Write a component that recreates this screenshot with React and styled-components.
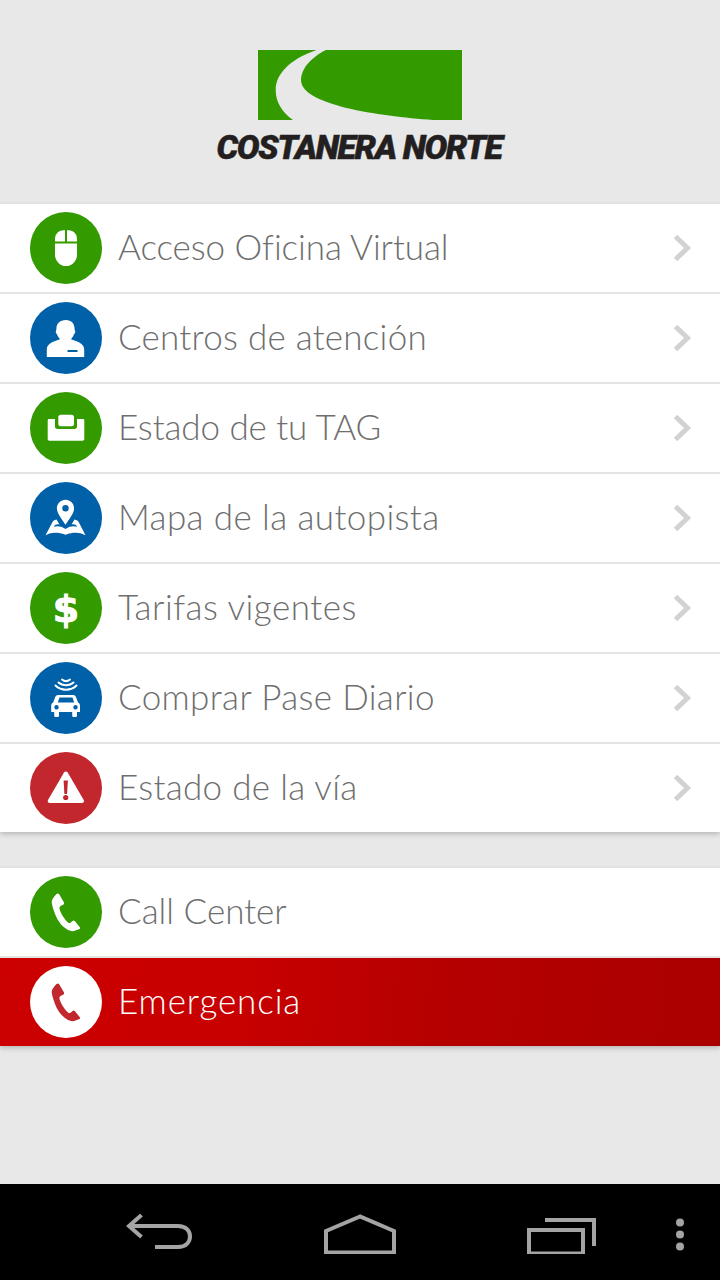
import styled, { createGlobalStyle } from "styled-components";

const GREEN = "#339a00";
const BLUE = "#0060a8";
const RED = "#c1272d";

const GlobalStyle = createGlobalStyle`
  html, body {
    margin: 0;
    padding: 0;
    background: #e8e8e8;
  }
`;

const Screen = styled.div`
  width: 720px;
  height: 1280px;
  display: flex;
  flex-direction: column;
  background: #e8e8e8;
  font-family: Lato, "Noto Sans", sans-serif;
  overflow: hidden;
`;

const Header = styled.header`
  height: 204px;
  flex-shrink: 0;
  display: flex;
  flex-direction: column;
  align-items: center;
  padding-top: 50px;
  box-sizing: border-box;
`;

const LogoMark = styled.svg`
  width: 204px;
  height: 70px;
  display: block;
`;

const LogoText = styled.div`
  margin: 10px 2px 0 0;
  font-family: Roboto, "Liberation Sans", sans-serif;
  font-weight: 900;
  font-style: italic;
  font-size: 34px;
  line-height: 34px;
  letter-spacing: -1.4px;
  -webkit-text-stroke: 0.5px #231f20;
  color: #231f20;
  white-space: nowrap;
`;

const Group = styled.nav`
  display: flex;
  flex-direction: column;
  flex-shrink: 0;
  margin-bottom: 36px;
  box-shadow: 0 2px 5px rgba(0, 0, 0, 0.22);
`;

const Row = styled.a`
  height: 88px;
  display: flex;
  align-items: center;
  gap: 16px;
  padding: 0 28px 0 30px;
  background: ${(p) => (p.$danger ? "linear-gradient(95deg, #cc0000 0%, #c80000 33%, #b60000 60%, #aa0000 100%)" : "#fff")};
  color: ${(p) => (p.$danger ? "#fff" : "#6e6e6e")};
`;

const Divider = styled.div`
  display: flex;
  flex-direction: column;
  gap: 2px;
  background: #e4e4e4;
`;

const Circle = styled.span`
  width: 72px;
  height: 72px;
  flex-shrink: 0;
  border-radius: 50%;
  background: ${(p) => p.$color};
  display: block;
`;

const CircleIcon = styled.svg`
  width: 72px;
  height: 72px;
  display: block;
`;

const Label = styled.span`
  flex: 1;
  font-size: 35px;
  font-weight: 300;
  line-height: 40px;
  letter-spacing: ${(p) => p.$spacing || 0}px;
  font-variant-ligatures: none;
  white-space: nowrap;
  padding-bottom: 4px;
`;

const Chevron = styled.svg`
  width: 20px;
  height: 28px;
  flex-shrink: 0;
`;

const Spacer = styled.div`
  flex: 1;
`;

const NavBar = styled.footer`
  height: 96px;
  flex-shrink: 0;
  background: #000;
  display: grid;
  grid-template-columns: 200px 200px 200px 40px;
  align-items: start;
  justify-items: center;
  padding: 30px 0 0 60px;
  box-sizing: border-box;
`;

const NavIcon = styled.svg`
  width: ${(p) => p.$w}px;
  height: 40px;
  display: block;
  fill: none;
  stroke: #a4a4a4;
  stroke-width: 4;
`;

const MouseIcon = () => (
  <CircleIcon viewBox="0 0 72 72" fill="#fff">
    <path d="M25 31.5H47V42.5a11 11.5 0 0 1-22 0Z" />
    <path d="M25 29.5V26.5a8.5 8.5 0 0 1 10-8.2V29.5Z" />
    <path d="M47 29.5V26.5a8.5 8.5 0 0 0-10-8.2V29.5Z" />
  </CircleIcon>
);

const PersonIcon = () => (
  <CircleIcon viewBox="0 0 72 72" fill="#fff">
    <path d="M36 18c5.500 0 8.600 3.800 8.600 9 0 1 .4 1.600.6 2.400.2 1.200-.5 2.200-1.200 2.600-.5 2-1.400 3.400-2.600 4.400v1.200c4 1.600 12.800 3.400 12.800 9.600V55H16.800v-7.800c0-6.200 8.800-8 12.800-9.600v-1.200c-1.200-1-2.100-2.400-2.600-4.400-.7-.4-1.400-1.400-1.200-2.600.2-.8.6-1.400.6-2.400 0-5.200 3.100-9 9.600-9Z" />
    <rect x="37.500" y="48" width="10" height="2" fill={BLUE} />
  </CircleIcon>
);

const TagIcon = () => (
  <CircleIcon viewBox="0 0 72 72" fill="#fff">
    <path d="M19 27h6v7.500c0 1.500 1 2.500 2.500 2.500h17c1.500 0 2.500-1 2.500-2.500V27h6c.8 0 1.300.5 1.300 1.300V47c0 1-.7 1.700-1.700 1.700H19.400c-1 0-1.700-.7-1.700-1.700V28.300c0-.8.500-1.300 1.300-1.300Z" />
    <rect x="28.300" y="22.700" width="15.700" height="11.500" rx="2.500" />
  </CircleIcon>
);

const MapIcon = () => (
  <CircleIcon viewBox="0 0 72 72" fill="#fff">
    <path fillRule="evenodd" d="M35.500 17.700c4.800 0 8.600 3.800 8.600 8.500 0 5-5 11-8.600 16.500-3.600-5.500-8.600-11.500-8.600-16.500 0-4.700 3.800-8.500 8.600-8.500Zm0 5.300a3.200 3.200 0 1 0 0 6.400 3.200 3.200 0 0 0 0-6.400Z" />
    <path d="M26.500 37.500c1 1.800 2 3.300 3 5-2.500-.5-4.300 0-5.800 2.300 2.800-1 7.300-1 11.800 2.200 4.500-3.200 9-3.200 11.800-2.200-1.500-2.300-3.300-2.800-5.800-2.300 1-1.700 2-3.200 3-5 2.300.5 3.700 1.200 4.700 3.500l6.300 12.300c-3.500-2-10-4.300-20-.5-10-3.800-16.500-1.500-20 .5L22 41c1-2.300 2.200-3 4.500-3.500Z" />
  </CircleIcon>
);

const DollarIcon = () => (
  <CircleIcon viewBox="0 0 72 72">
    <text x="36" y="50" textAnchor="middle" fill="#fff" stroke="#fff" strokeWidth="1" fontFamily="'DejaVu Sans', sans-serif" fontWeight="700" fontSize="38">$</text>
  </CircleIcon>
);

const CarIcon = () => (
  <CircleIcon viewBox="0 0 72 72">
    <g fill="none" stroke="#fff" strokeWidth="2" strokeLinecap="round">
      <path d="M32 17.500c2.500 2 5.500 2 8 0" />
      <path d="M28.500 20.500c4 3.600 11 3.600 15 0" />
      <path d="M25.500 23.500c5.500 5.500 15.500 5.500 21 0" />
    </g>
    <path
      fill="#fff"
      fillRule="evenodd"
      d="M29 33h14c1.500 0 2.500.7 3 2l2 5.500c1.300.7 2 1.800 2 3.200V50h-3v3.500c0 1-.6 1.500-1.500 1.500h-1.800c-.9 0-1.500-.5-1.500-1.500V50H29v3.500c0 1-.6 1.500-1.500 1.500h-1.800c-.9 0-1.500-.5-1.500-1.500V50h-3v-6.300c0-1.400.7-2.500 2-3.200l2-5.500c.5-1.300 1.500-2 3-2Zm.5 2.500-1.700 5h16.400l-1.700-5ZM26.500 43a2.200 2.200 0 1 0 0 4.400 2.200 2.200 0 0 0 0-4.400Zm19 0a2.200 2.200 0 1 0 0 4.400 2.200 2.200 0 0 0 0-4.400Z"
    />
  </CircleIcon>
);

const WarningIcon = () => (
  <CircleIcon viewBox="0 0 72 72">
    <path fill="#fff" d="M34 20.500c.9-1.500 2.800-1.500 3.700 0l16 27.500c.8 1.500-.1 3-1.800 3H19.800c-1.700 0-2.600-1.500-1.800-3Z" />
    <path fill={RED} d="M33.600 28.500h4.300l-.8 13.500h-2.700Z" />
    <circle cx="35.700" cy="45.500" r="2.600" fill={RED} />
  </CircleIcon>
);

const PhoneIcon = ({ color }) => (
  <CircleIcon viewBox="0 0 72 72">
    <path
      fill={color}
      d="M26.500 18Q28 17 29 18L34 26.500Q34.500 27.800 33.500 28.500L30.500 30Q29 31 29.500 33Q32 41 38 46.500Q39 47.500 40.500 46.800L42.500 45Q43.800 44 44.800 45L50 51.500Q50.500 52.500 49.500 53L44 55Q41 55.500 38 54Q29 49 25 38Q22 30 21.700 26Q21.700 23 26.500 18Z"
    />
  </CircleIcon>
);

const RightArrow = () => (
  <Chevron viewBox="0 0 20 28">
    <path d="M3.500 2.500 15.500 14 3.500 25.500" fill="none" stroke="#d2d2d2" strokeWidth="5" />
  </Chevron>
);

const menuItems = [
  { label: "Acceso Oficina Virtual", color: GREEN, Icon: MouseIcon, spacing: -0.07 },
  { label: "Centros de atención", color: BLUE, Icon: PersonIcon, spacing: 0.25 },
  { label: "Estado de tu TAG", color: GREEN, Icon: TagIcon, spacing: -0.1 },
  { label: "Mapa de la autopista", color: BLUE, Icon: MapIcon, spacing: 0.4 },
  { label: "Tarifas vigentes", color: GREEN, Icon: DollarIcon, spacing: 0.5 },
  { label: "Comprar Pase Diario", color: BLUE, Icon: CarIcon, spacing: 0.35 },
  { label: "Estado de la vía", color: RED, Icon: WarningIcon, spacing: 0.3 },
];

const App = () => {
  return (
    <>
      <GlobalStyle />
      <Screen>
        <Header>
          <LogoMark viewBox="0 0 204 70">
            <path fill={GREEN} d="M0 0H58.500C30 10 17.700 25 17.700 40C17.700 52 24 62 35 70H0Z" />
            <path fill={GREEN} d="M68 0H204V70H175C120 66 43 55 43 30C43 18 54 7 68 0Z" />
          </LogoMark>
          <LogoText>COSTANERA NORTE</LogoText>
        </Header>

        <Group>
          <Divider>
            {menuItems.map(({ label, color, Icon, spacing }) => (
              <Row key={label}>
                <Circle $color={color}>
                  <Icon />
                </Circle>
                <Label $spacing={spacing}>{label}</Label>
                <RightArrow />
              </Row>
            ))}
          </Divider>
        </Group>

        <Group>
          <Divider>
            <Row>
              <Circle $color={GREEN}>
                <PhoneIcon color="#fff" />
              </Circle>
              <Label>Call Center</Label>
            </Row>
            <Row $danger>
              <Circle $color="#fff">
                <PhoneIcon color={RED} />
              </Circle>
              <Label $spacing={0.9}>Emergencia</Label>
            </Row>
          </Divider>
        </Group>

        <Spacer />

        <NavBar>
          <NavIcon $w={68} viewBox="0 0 68 40">
            <path d="M15.500 1 3 12 15.500 23" />
            <path d="M3 12H52C60 12 64 17 64 22.500S60 33 52 33H29" />
          </NavIcon>
          <NavIcon $w={72} viewBox="0 0 72 40">
            <path d="M36 2.500 2 17V38.500H70V17Z" />
          </NavIcon>
          <NavIcon $w={72} viewBox="-1 0 72 40">
            <path d="M4 16H58V39.500H4Z" />
            <path d="M20 6H69V32" />
          </NavIcon>
          <NavIcon $w={10} viewBox="0 0 10 40">
            <circle cx="5" cy="8.500" r="4" fill="#a4a4a4" stroke="none" />
            <circle cx="5" cy="20.500" r="4" fill="#a4a4a4" stroke="none" />
            <circle cx="5" cy="32.500" r="4" fill="#a4a4a4" stroke="none" />
          </NavIcon>
        </NavBar>
      </Screen>
    </>
  );
};

export default App;
